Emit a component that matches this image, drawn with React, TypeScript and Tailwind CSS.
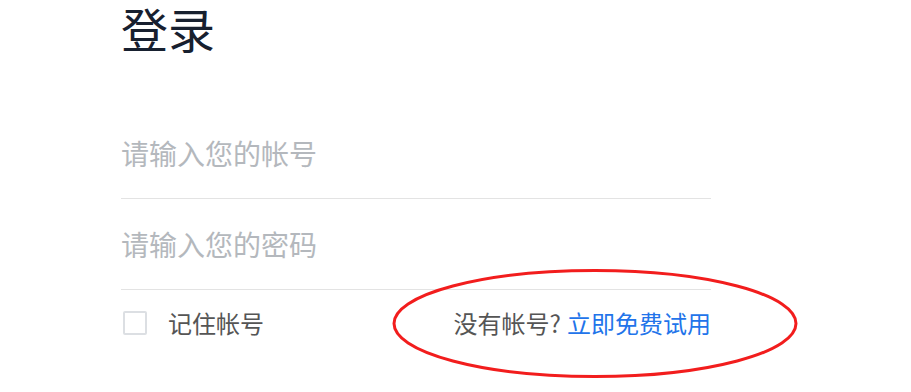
import React from 'react';

const font = { fontFamily: '"Noto Sans CJK SC", "Noto Sans", sans-serif' };

const Field: React.FC<{ placeholder: string; type?: string }> = ({ placeholder, type = 'text' }) => (
  <div className="h-[91px] border-b border-[#e3e3e3] flex items-center">
    <input
      type={type}
      placeholder={placeholder}
      className="w-full bg-transparent outline-none text-[28px] text-[#333] placeholder-[#b4b8bd]"
      style={font}
    />
  </div>
);

export default function App() {
  return (
    <div className="relative w-[911px] h-[392px] bg-white overflow-hidden" style={font}>
      <div className="w-[590px] ml-[121px]">
        {/* Title */}
        <div className="h-[108px] pt-[2px]">
          <h1 className="text-[47px] leading-[52px] text-[#17202f] font-normal">登录</h1>
        </div>

        <Field placeholder="请输入您的帐号" />
        <Field placeholder="请输入您的密码" type="password" />

        {/* Remember + signup */}
        <div className="h-[66px] flex items-center justify-between">
          <label className="flex items-center gap-[21px] cursor-pointer">
            <span className="ml-[2px] w-[24px] h-[24px] border-2 border-[#dcdfe3] rounded-[2px] bg-white" />
            <span className="text-[24px] text-[#555]">记住帐号</span>
          </label>
          <div className="text-[24px] text-[#555]">
            没有帐号?<span className="ml-[6px]" /><a className="text-[#2274ea] cursor-pointer">立即免费试用</a>
          </div>
        </div>
      </div>

      {/* Annotation ellipse */}
      <svg className="absolute left-0 top-0 pointer-events-none" width="911" height="392">
        <ellipse cx="595" cy="323.5" rx="201" ry="53" fill="none" stroke="#f21d1d" strokeWidth="3" />
      </svg>
    </div>
  );
}
